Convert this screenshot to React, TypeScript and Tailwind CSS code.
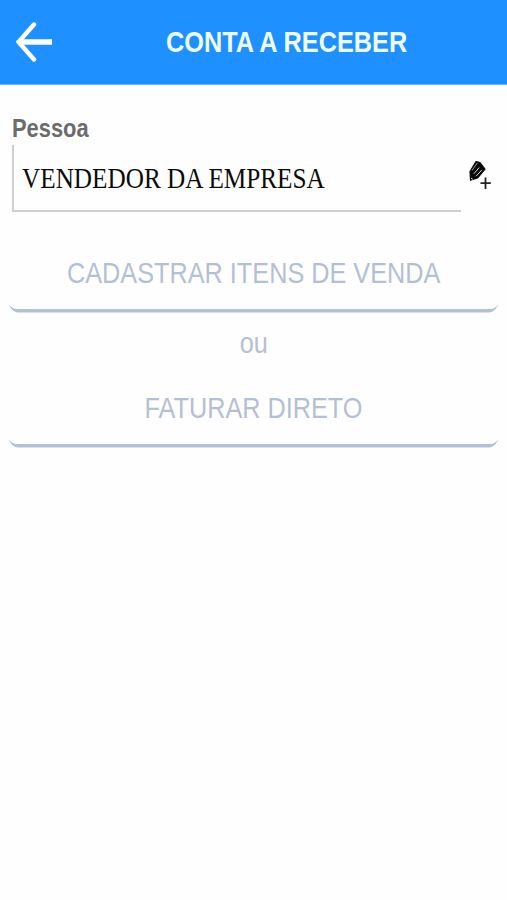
const PencilPlus = () => (
    <svg width="26" height="32" viewBox="0 0 26 32" fill="none">
        <path d="M9 2.5 L13 3.5 L18 10 L10.5 19 L3.5 21.2 L3 12.5 Z" fill="#0a0a0a" stroke="#0a0a0a" strokeWidth="1.2" strokeLinejoin="round" />
        <path d="M10.4 3.8 L5 11.4" stroke="#aaa" strokeWidth="0.9" />
        <path d="M12.2 8.6 L6.8 14.8 M14.8 11 L9 17.2" stroke="#d8d8d8" strokeWidth="1" />
        <path d="M4 19 L5.8 20.4" stroke="#ddd" strokeWidth="1" />
        <path d="M18.5 18.5 V30 M13.5 24.2 H23.8" stroke="#222" strokeWidth="1.8" />
    </svg>
);

const BottomEdge = () => (
    <svg className="block w-full" height="9" viewBox="0 0 491 9" preserveAspectRatio="none">
        <path d="M0.5 0.3 C3 3.5 5.5 5 9 5 H482 C485.5 5 488 3.5 490.5 0.3 C488 5 485.5 8.5 481 8.5 H10 C5.5 8.5 3 5 0.5 0.3 Z" fill="#b4c0d8" />
    </svg>
);

function ActionButton({ label }: { label: string }) {
    return (
        <button className="block w-[491px]">
            <span className="flex h-[59px] items-center justify-center pb-[3px]">
                <span className="inline-block scale-x-[0.842] whitespace-nowrap text-[30px] leading-[34px]">
                    {label}
                </span>
            </span>
            <BottomEdge />
        </button>
    );
}

export default function App() {
    return (
        <div className="h-[900px] w-[507px] overflow-hidden bg-[#fefefe] font-['Liberation_Sans',Arial,sans-serif]">
            <header className="flex h-[85px] items-center border-b border-[#6cb6f5] bg-[#1e90ff]">
                <button className="ml-4 shrink-0">
                    <svg className="block" width="38" height="42" viewBox="0 0 38 42" fill="none">
                        <path d="M18 3.5 L2.5 21 L18 38.5" stroke="white" strokeWidth="4.4" strokeLinecap="round" />
                        <path d="M3 21 H36" stroke="white" strokeWidth="5.4" />
                    </svg>
                </button>
                <h1 className="ml-[112px] w-[242px] whitespace-nowrap text-[30px] font-bold leading-[34px] text-[#f0fbff]">
                    <span className="inline-block origin-left scale-x-[0.843]">CONTA A RECEBER</span>
                </h1>
            </header>

            <main>
                <div className="pl-3 pt-[29px]">
                    <label className="block h-[31px] text-[25px] font-bold leading-[29px] text-[#6b6b6b]">
                        <span className="inline-block origin-left scale-x-[0.875]">Pessoa</span>
                    </label>
                    <div className="flex">
                        <div className="h-[67px] w-[449px] border-b-2 border-l-2 border-[#cfcfcf] pl-2 pt-4 font-['Liberation_Serif','Times_New_Roman',serif] text-[30px] leading-[34px] text-[#0c0c0c]">
                            <span className="inline-block origin-left scale-x-[0.841] whitespace-nowrap">VENDEDOR DA EMPRESA</span>
                        </div>
                        <button className="ml-[6px] mt-[14px] self-start">
                            <PencilPlus />
                        </button>
                    </div>
                </div>

                <div className="flex flex-col items-center pt-[33px] text-[#b5bfd4]">
                    <ActionButton label="CADASTRAR ITENS DE VENDA" />
                    <p className="flex h-[67px] items-center pb-[7px] text-[30px] leading-[34px]">
                        <span className="inline-block scale-x-[0.842]">ou</span>
                    </p>
                    <ActionButton label="FATURAR DIRETO" />
                </div>
            </main>
        </div>
    );
}
